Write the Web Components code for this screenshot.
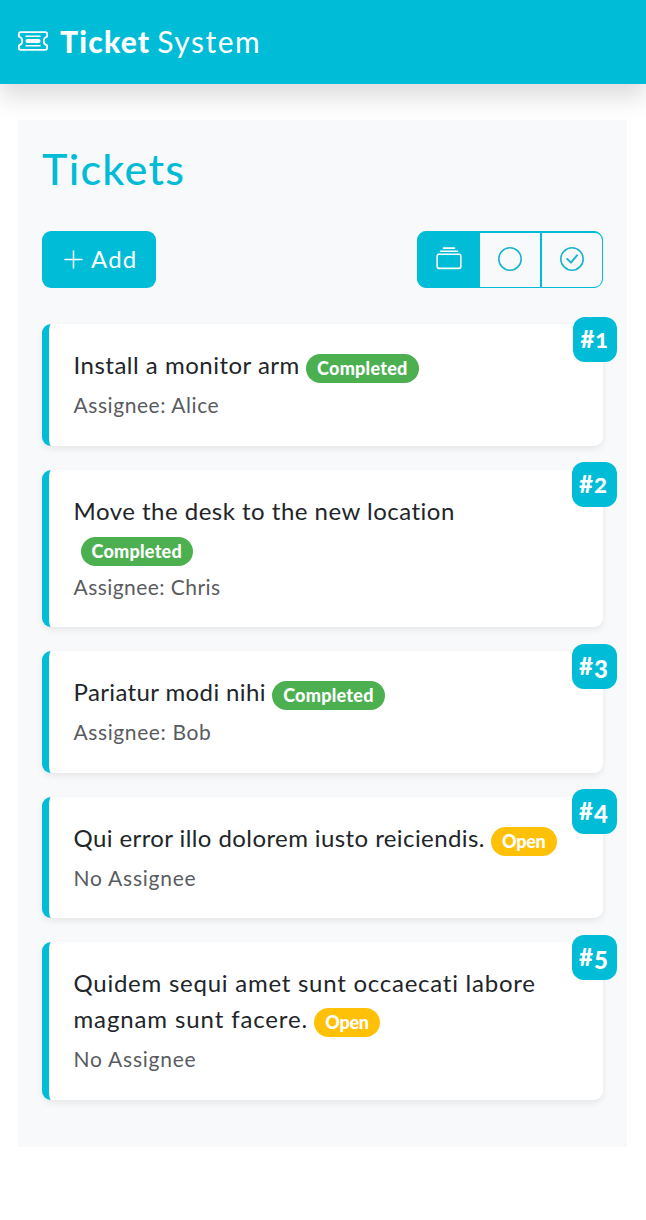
<!DOCTYPE html>
<html lang="en"><head><meta charset="utf-8"><title>Ticket System</title>
<style>
html,body{margin:0;background:#fff}
body{font-family:Lato,"Open Sans",sans-serif;font-size:24px;line-height:1.5;color:#212529;height:1220px;overflow:hidden;font-variant-ligatures:none}
</style></head><body>
<ticket-app></ticket-app>
<script>
const def=(name,html)=>customElements.define(name,class extends HTMLElement{
  constructor(){super();const t=document.createElement('template');t.innerHTML=html;
    this.attachShadow({mode:'open'}).append(t.content.cloneNode(true));}
});

def('app-header',`<style>
:host{display:flex;align-items:center;box-sizing:border-box;height:84px;padding:0 18px 2px;background:#00bcd7;color:#fff;font-size:30px;box-shadow:0 12px 24px rgba(0,0,0,.15);position:relative}
svg{width:30px;height:30px;margin-right:12px}
b{font-weight:900;letter-spacing:1.2px}
span{margin-left:7px;letter-spacing:1.5px}
</style><svg viewBox="0 0 30 30" fill="none" stroke="#fff" stroke-width="1.8" stroke-linecap="round">
<path d="M2.7 6.2H27.3Q29.1 6.2 29.1 8V10.5A4.7 4.7 0 0 0 29.1 19.5V22Q29.1 23.8 27.3 23.8H2.7Q.9 23.8 .9 22V19.5A4.7 4.7 0 0 0 .9 10.5V8Q.9 6.2 2.7 6.2Z"/><path d="M8 10.2H22M8 19.8H22" stroke-width="1.5"/><path d="M9.5 15H20.5" stroke-width="4"/></svg><b><slot name="strong"></slot></b><span><slot></slot></span>`);

def('add-button',`<style>
:host{display:flex;align-items:center;box-sizing:border-box;width:114px;height:57px;padding:0 0 2px 22px;border-radius:9px;background:#00bcd7;color:#fff;letter-spacing:1.2px}
svg{width:20px;height:20px;margin-right:7px}
</style><svg viewBox="0 0 20 20" stroke="#fff" stroke-width="1.5" stroke-linecap="round"><path d="M1 10.5H18M9.5 2V19"/></svg><slot></slot>`);

def('filter-group',`<style>
:host{display:flex;box-sizing:border-box;width:186px;height:57px;border:1.5px solid #00bcd7;border-radius:9px;overflow:hidden;background:#00bcd7;gap:1.5px;padding:.5px}
div{flex:1;display:flex;align-items:center;justify-content:center;padding-bottom:1.5px;color:#17b4cc;background:#f8f9fb}
div:last-child{border-radius:0 7px 7px 0}
div.on{background:#00bcd7;color:#fff}
svg{width:26px;height:26px}
</style><div class="on"><svg viewBox="0 0 26 26" fill="none" stroke="currentColor" stroke-width="1.6" stroke-linecap="round"><rect x="1.2" y="8.2" width="23.6" height="14.2" rx="1.8"/><path d="M4.5 5.3H21.5M7.5 2.1H18.5"/></svg></div>
<div><svg viewBox="0 0 26 26" fill="none" stroke="currentColor" stroke-width="1.6"><circle cx="13" cy="13" r="11.2"/></svg></div>
<div><svg viewBox="0 0 26 26" fill="none" stroke="currentColor" stroke-width="1.6" stroke-linecap="round" stroke-linejoin="round"><circle cx="13" cy="13" r="11.2"/><path d="M8.3 13L12 16.7L18 9.3" stroke-width="1.9"/></svg></div>`);

def('status-badge',`<style>
:host{display:inline-block;box-sizing:border-box;width:112.5px;height:29.25px;line-height:28.5px;padding-left:11px;border-radius:15px;font-size:18px;font-weight:900;letter-spacing:.25px;color:#fff;background:#4caf50;vertical-align:-1px;margin:0 0 -5px 6.25px}
:host([open]){width:65.5px;letter-spacing:-.3px;background:#ffc107}
:host([wrapped]){margin-left:7px;vertical-align:-2px}
</style><slot></slot>`);

def('ticket-card',`<style>
:host{display:block;position:relative;box-sizing:border-box;padding:24px;border-left:7.5px solid #00bcd7;border-radius:9px;background:#fff;box-shadow:0 3px 6px rgba(0,0,0,.075)}
.t{line-height:36px;margin-top:-1px;padding:0 0 1px .5px;white-space:nowrap}
.a{margin-top:5px;padding:0 0 1px .5px;font-size:21px;line-height:31.5px;color:#595c5f}
.n{position:absolute;top:-7.25px;right:-13.5px;box-sizing:border-box;width:45px;height:45px;padding-left:7.5px;border-radius:12px;background:#00bcd7;color:#fff;font-weight:900;line-height:43px;white-space:nowrap}
:host([narrow]) .n{width:43.5px}
</style><div class="t"><slot></slot></div><div class="a"><slot name="who"></slot></div><div class="n"><slot name="num"></slot></div>`);

def('ticket-app',`<style>
:host{display:block}
main{margin:36px 19px 0 18px;box-sizing:border-box;height:1027px;padding:24px;background:#f8f9fb}
h2{margin:-1px 0 0;padding-bottom:1px;font-size:43px;font-weight:500;line-height:51px;color:#00bcd7;letter-spacing:1.3px}
.bar{display:flex;justify-content:space-between;margin:36px 0}
.list{display:flex;flex-direction:column;gap:24px}
i{font-style:normal;display:inline-block;line-height:1;margin-left:1px}
.x{font-size:20px;transform:scaleX(1.12);transform-origin:left}
.d{transform:translateY(3px)}
</style>
<app-header><span slot="strong">Ticket</span>System</app-header>
<main><h2>Tickets</h2>
<div class="bar"><add-button>Add</add-button><filter-group></filter-group></div>
<div class="list">
<ticket-card narrow><span style="letter-spacing:.5px">Install a monitor arm</span><status-badge>Completed</status-badge><span slot="who" style="letter-spacing:.56px">Assignee: Alice</span><span slot="num">#<i class="x">1</i></span></ticket-card>
<ticket-card><span style="letter-spacing:.49px">Move the desk to the new location</span><br><status-badge wrapped>Completed</status-badge><span slot="who" style="letter-spacing:.44px">Assignee: Chris</span><span slot="num">#<i class="x">2</i></span></ticket-card>
<ticket-card><span style="letter-spacing:.38px">Pariatur modi nihi</span><status-badge>Completed</status-badge><span slot="who" style="letter-spacing:.6px">Assignee: Bob</span><span slot="num">#<i class="d">3</i></span></ticket-card>
<ticket-card><span style="letter-spacing:.41px">Qui error illo dolorem iusto reiciendis.</span><status-badge open>Open</status-badge><span slot="who" style="letter-spacing:.76px">No Assignee</span><span slot="num">#<i class="d">4</i></span></ticket-card>
<ticket-card><span style="letter-spacing:.75px">Quidem sequi amet sunt occaecati labore</span><br><span style="letter-spacing:.88px">magnam sunt facere.</span><status-badge open>Open</status-badge><span slot="who" style="letter-spacing:.76px">No Assignee</span><span slot="num">#<i class="d">5</i></span></ticket-card>
</div></main>`);
</script></body></html>
